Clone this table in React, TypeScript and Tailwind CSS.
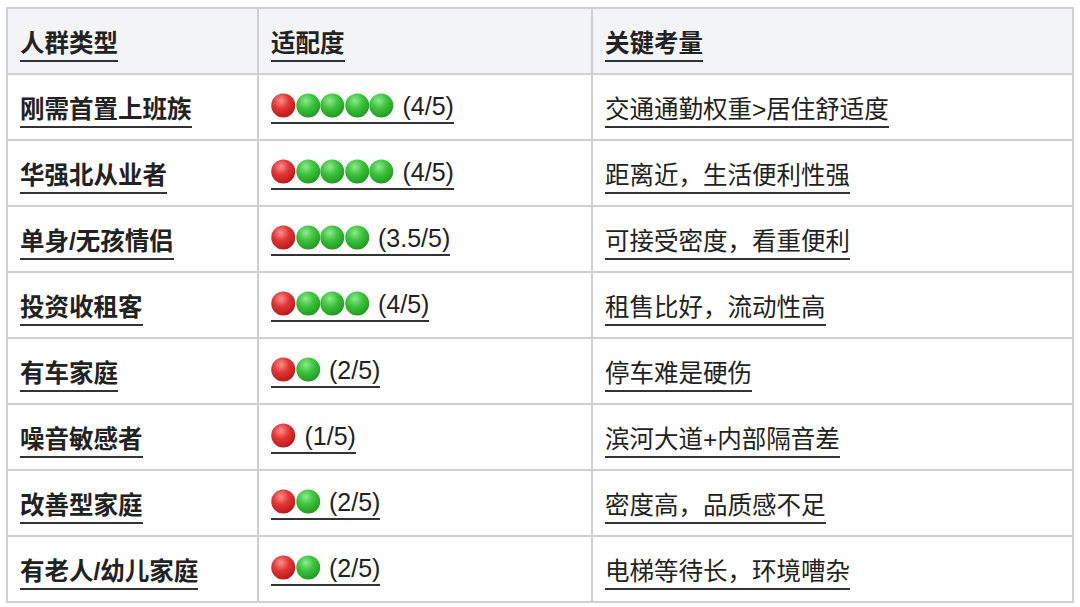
import React from 'react';

interface Row {
  group: string;
  red: number;
  green: number;
  score: string;
  note: string;
}

const rows: Row[] = [
  { group: '刚需首置上班族', red: 1, green: 4, score: '(4/5)', note: '交通通勤权重>居住舒适度' },
  { group: '华强北从业者', red: 1, green: 4, score: '(4/5)', note: '距离近，生活便利性强' },
  { group: '单身/无孩情侣', red: 1, green: 3, score: '(3.5/5)', note: '可接受密度，看重便利' },
  { group: '投资收租客', red: 1, green: 3, score: '(4/5)', note: '租售比好，流动性高' },
  { group: '有车家庭', red: 1, green: 1, score: '(2/5)', note: '停车难是硬伤' },
  { group: '噪音敏感者', red: 1, green: 0, score: '(1/5)', note: '滨河大道+内部隔音差' },
  { group: '改善型家庭', red: 1, green: 1, score: '(2/5)', note: '密度高，品质感不足' },
  { group: '有老人/幼儿家庭', red: 1, green: 1, score: '(2/5)', note: '电梯等待长，环境嘈杂' },
];

const Dot: React.FC<{ color: 'red' | 'green' }> = ({ color }) => {
  const id = `g-${color}`;
  return (
    <svg width="24.5" height="25" viewBox="0 0 24.5 25" className="block shrink-0">
      <defs>
        <radialGradient id={id} cx="0.4" cy="0.3" r="0.75">
          {color === 'red' ? (
            <>
              <stop offset="0" stopColor="#ff8f8f" />
              <stop offset="0.45" stopColor="#e33535" />
              <stop offset="1" stopColor="#b41616" />
            </>
          ) : (
            <>
              <stop offset="0" stopColor="#8eea8e" />
              <stop offset="0.45" stopColor="#3cc33c" />
              <stop offset="1" stopColor="#1e951e" />
            </>
          )}
        </radialGradient>
      </defs>
      <circle cx="12.25" cy="12.5" r="12" fill={`url(#${id})`} />
    </svg>
  );
};

const cell = 'h-[66px] border-2 border-[#d0d0d0] px-[12px] pt-[6px] pb-0 align-middle';
const link = 'inline-block leading-none pb-[4px] border-b-2 border-[#333]';

export default function App() {
  return (
    <div
      className="w-[1080px] h-[607px] bg-white pl-[6px] pt-[7px] text-[#222]"
      style={{ fontFamily: '"Liberation Sans", "Noto Sans CJK SC", sans-serif' }}
    >
      <table className="border-collapse w-[1068px] text-[24.5px]">
        <thead>
          <tr className="bg-[#f3f4f5]">
            <th className={`${cell} w-[251px] text-left font-semibold`}>
              <span className={link}>人群类型</span>
            </th>
            <th className={`${cell} w-[334px] text-left font-semibold`}>
              <span className={link}>适配度</span>
            </th>
            <th className={`${cell} text-left font-semibold`}>
              <span className={link}>关键考量</span>
            </th>
          </tr>
        </thead>
        <tbody>
          {rows.map(r => (
            <tr key={r.group}>
              <td className={`${cell} font-semibold`}>
                <span className={link}>{r.group}</span>
              </td>
              <td className={cell}>
                <span className="inline-flex items-center border-b-2 border-[#333] pb-[3px] leading-none">
                  {Array.from({ length: r.red }).map((_, i) => (
                    <Dot key={`r${i}`} color="red" />
                  ))}
                  {Array.from({ length: r.green }).map((_, i) => (
                    <Dot key={`g${i}`} color="green" />
                  ))}
                  <span className="ml-[9px] pt-[2px] text-[25px]">{r.score}</span>
                </span>
              </td>
              <td className={cell}>
                <span className={link}>{r.note}</span>
              </td>
            </tr>
          ))}
        </tbody>
      </table>
    </div>
  );
}
